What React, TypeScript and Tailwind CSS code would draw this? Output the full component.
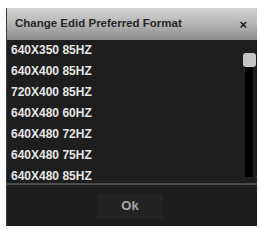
import React from "react";

const formats = [
  "640X350 85HZ",
  "640X400 85HZ",
  "720X400 85HZ",
  "640X480 60HZ",
  "640X480 72HZ",
  "640X480 75HZ",
  "640X480 85HZ",
];

export default function App() {
  return (
    <div className="w-[259px] h-[229px] bg-white pt-[8px] pl-[6px] pr-[2px] font-['Liberation_Sans',Arial,sans-serif]">
      <div className="w-[251px] h-[218px] flex flex-col border-l border-[#3a3a3a] bg-[#1d1d1d]">
        <div className="h-[32px] shrink-0 flex items-center justify-between pl-[8px] pr-[10px] bg-gradient-to-b from-[#d6d6d6] via-[#b4b4b4] to-[#8c8c8c]">
          <span className="text-[11.5px] font-bold text-[#262626]">Change Edid Preferred Format</span>
          <span className="text-[13px] font-bold text-[#1a1a1a] leading-none">×</span>
        </div>
        <div className="h-[145px] shrink-0 flex bg-[#1e1e1e] border-b-2 border-[#4a4a4a] overflow-hidden">
          <div className="flex-1 flex flex-col pl-[4px]">
            {formats.map((f) => (
              <div key={f} className="h-[20.9px] shrink-0 flex items-center text-[12px] font-bold text-[#e6e6e6]">
                {f}
              </div>
            ))}
          </div>
          <div className="w-[14px] mr-[1px] pt-[13px] pb-[6px] flex flex-col items-center">
            <div className="w-[13px] h-[14px] rounded-[3px] bg-[#c4c4c4]" />
            <div className="w-[8px] flex-1 bg-black" />
          </div>
        </div>
        <div className="flex-1 flex items-center justify-center">
          <div className="w-[66px] h-[25px] mr-[4px] mt-[1px] flex items-center justify-center bg-[#232323] text-[13px] font-bold text-[#a8a8a8]">
            Ok
          </div>
        </div>
      </div>
    </div>
  );
}
